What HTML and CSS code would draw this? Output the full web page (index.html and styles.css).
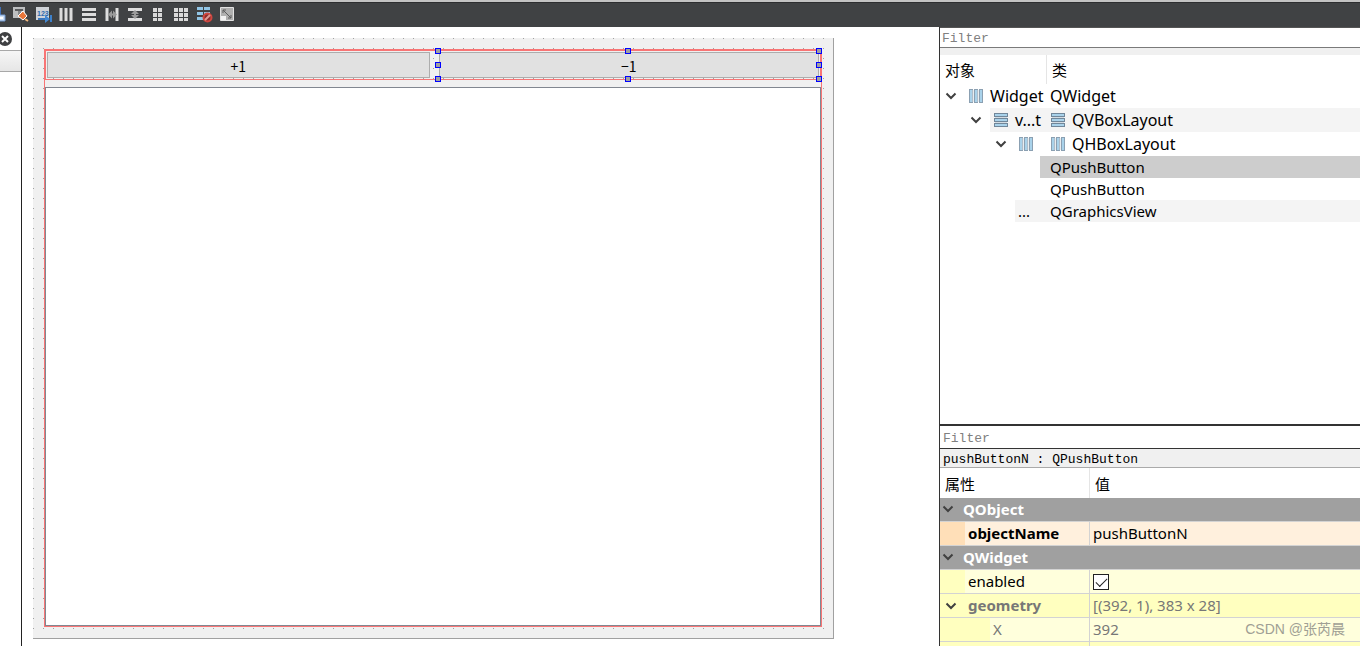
FILE: index.html
```html
<!DOCTYPE html>
<html lang="zh-CN">
<head>
<meta charset="utf-8">
<title>Widget - Qt Designer</title>
<link rel="stylesheet" href="styles.css">
</head>
<body>
<svg class="defs" aria-hidden="true">
  <defs>
    <linearGradient id="blue-h" x1="0" x2="1" y1="0" y2="0"><stop offset="0" stop-color="#8db8d4"/><stop offset="1" stop-color="#b9dcf0"/></linearGradient>
    <linearGradient id="blue-v" x1="0" x2="0" y1="0" y2="1"><stop offset="0" stop-color="#b9def2"/><stop offset="1" stop-color="#8ab6d2"/></linearGradient>
    <symbol id="chevron" viewBox="0 0 12 8"><path d="M1.500 1.500 6 6l4.500-4.500" fill="none" stroke="currentColor" stroke-width="2"/></symbol>
    <symbol id="hbox" viewBox="0 0 14 14"><path d="M0 0h4v14H0zM5 0h4v14H5zM10 0h4v14h-4z" fill="#8ba0b2"/><path d="M1 1h2v12H1zM6 1h2v12H6zM11 1h2v12h-2z" fill="#a9d2ea"/><path d="M4 1v12M9 1v12" stroke="#d4dce2"/></symbol>
    <symbol id="vbox" viewBox="0 0 14 14"><path d="M0 0h14v4H0zM0 5h14v4H0zM0 10h14v4H0z" fill="#71879a"/><path d="M1 1h12v2H1zM1 6h12v2H1zM1 11h12v2H1z" fill="#a9d2ea"/><path d="M1 4.500h12M1 9.500h12" stroke="#d4dce2"/></symbol>
  </defs>
</svg>
<header class="toolbar">
  <button class="tool tool-cut" aria-label="Edit widgets"><svg viewBox="0 0 16 16"><path d="M6 0h5v9H6z" fill="#3f6fb5"/><path d="M2 8h13v6H2z" fill="#cfe0f5" stroke="#6f97cf"/><path d="M4 11h9" stroke="#fff" stroke-width="2"/></svg></button>
  <button class="tool" aria-label="Edit signals and slots"><svg viewBox="0 0 16 16"><path d="M0 0h12v11H0z" fill="#bdbfc1"/><path d="M2 2h8v2H2z" fill="#5a5c5e"/><path d="M5 4h3v6H5z" fill="#85888a"/><path d="m10 4 4 5-4 4-5-4z" fill="#e8763a" stroke="#fff"/><path d="m12 12 3 2" stroke="#f5bb80" stroke-width="2"/></svg></button>
  <button class="tool" aria-label="Edit tab order"><svg viewBox="0 0 16 16"><path d="M0 0h13v13H0z" fill="#cfd3d8"/><text class="digits" x="1" y="9">123</text><path d="M2 12h8" stroke="#3976bd" stroke-width="2"/><path d="m9 8 5 4-5 4z" fill="#4289d4"/><path d="M15 8v7" stroke="#3d80ca" stroke-width="2"/></svg></button>
  <button class="tool" aria-label="Lay out horizontally"><svg viewBox="0 0 16 16"><path d="M2 1v13M7 1v13M12 1v13" stroke="#dcdcdc" stroke-width="3"/></svg></button>
  <button class="tool" aria-label="Lay out vertically"><svg viewBox="0 0 16 16"><path d="M0 2.500h14M0 7.500h14M0 12.500h14" stroke="#dcdcdc" stroke-width="3"/></svg></button>
  <button class="tool" aria-label="Lay out horizontally in splitter"><svg viewBox="0 0 16 16"><path d="M2 1v13M12 1v13" stroke="#dedede" stroke-width="3"/><path d="m3 7.500 4-4v3h1v-3l4 4-4 4v-3H7v3z" fill="#9a9a9a"/></svg></button>
  <button class="tool" aria-label="Lay out vertically in splitter"><svg viewBox="0 0 16 16"><path d="M0 2.500h14M0 12.500h14" stroke="#dedede" stroke-width="3"/><path d="m7 3-4 4h3v1H3l4 4 4-4H8V7h3z" fill="#9a9a9a"/></svg></button>
  <button class="tool" aria-label="Lay out in form"><svg viewBox="0 0 16 16"><path d="M4 1v13M9 1v13" stroke="#dadada" stroke-width="4" stroke-dasharray="4 1"/></svg></button>
  <button class="tool" aria-label="Lay out in grid"><svg viewBox="0 0 16 16"><path d="M2 1v13M7 1v13M12 1v13" stroke="#dadada" stroke-width="4" stroke-dasharray="4 1"/></svg></button>
  <button class="tool" aria-label="Break layout"><svg viewBox="0 0 16 16"><path d="M0 1.500h13M0 6.500h13M0 11.500h6" stroke="#91c5e6" stroke-width="3" stroke-dasharray="6 1"/><circle cx="10.500" cy="10.500" r="4" fill="#8b2d2e" stroke="#cf4740" stroke-width="2"/><path d="m8 13 5-5" stroke="#dd9a95" stroke-width="2"/></svg></button>
  <button class="tool" aria-label="Adjust size"><svg viewBox="0 0 16 16"><path d="M.5.5h13v13H.5z" fill="#b0b0b0" stroke="#e2e2e2"/><path d="M1 9h5v4H1z" fill="#f2f2f2"/><path d="m3 3 8 8M3 6V3h3M11 8v3H8" fill="none" stroke="#5c5c5c"/></svg></button>
</header>
<main class="workspace">
  <aside class="dock">
    <div class="dock-title"><button class="close" aria-label="Close"><svg viewBox="0 0 14 14"><circle cx="7" cy="7" r="7" fill="#3f4042"/><path d="m4 4 6 6m0-6-6 6" stroke="#fff" stroke-width="2"/></svg></button></div>
    <div class="dock-header"></div>
  </aside>
  <section class="canvas">
    <div class="form">
      <div class="vbox-outline">
        <div class="hbox-outline">
          <button class="push">+1</button>
          <div class="selected">
            <button class="push">−1</button>
            <i class="handle left top"></i><i class="handle mid top"></i><i class="handle right top"></i>
            <i class="handle left center"></i><i class="handle right center"></i>
            <i class="handle left bottom"></i><i class="handle mid bottom"></i><i class="handle right bottom"></i>
          </div>
        </div>
        <div class="graphics-view"></div>
      </div>
    </div>
  </section>
  <aside class="inspectors">
    <section class="objects">
      <input class="filter" type="text" placeholder="Filter" aria-label="Filter objects">
      <table class="tree">
        <thead><tr><th>对象</th><th>类</th></tr></thead>
        <tbody>
          <tr class="level-0"><td><div class="node"><svg class="chevron"><use href="#chevron"/></svg><span class="item"><svg class="icon"><use href="#hbox"/></svg>Widget</span></div></td><td>QWidget</td></tr>
          <tr class="level-1 shaded"><td><div class="node"><svg class="chevron"><use href="#chevron"/></svg><span class="item"><svg class="icon"><use href="#vbox"/></svg>v...t</span></div></td><td><span class="type"><svg class="icon"><use href="#vbox"/></svg>QVBoxLayout</span></td></tr>
          <tr class="level-2"><td><div class="node"><svg class="chevron"><use href="#chevron"/></svg><span class="item"><svg class="icon"><use href="#hbox"/></svg></span></div></td><td><span class="type"><svg class="icon"><use href="#hbox"/></svg>QHBoxLayout</span></td></tr>
          <tr class="leaf level-3 current"><td><div class="node"><span class="item"></span></div></td><td>QPushButton</td></tr>
          <tr class="leaf level-3"><td><div class="node"><span class="item"></span></div></td><td>QPushButton</td></tr>
          <tr class="leaf level-2 shaded"><td><div class="node"><span class="item">...</span></div></td><td>QGraphicsView</td></tr>
        </tbody>
      </table>
    </section>
    <section class="properties">
      <input class="filter" type="text" placeholder="Filter" aria-label="Filter properties">
      <div class="object-name">pushButtonN : QPushButton</div>
      <table class="props">
        <thead><tr><th>属性</th><th>值</th></tr></thead>
        <tbody>
          <tr class="group"><th colspan="2"><svg class="chevron"><use href="#chevron"/></svg>QObject</th></tr>
          <tr class="orange"><td><div class="prop"><b>objectName</b></div></td><td>pushButtonN</td></tr>
          <tr class="group"><th colspan="2"><svg class="chevron"><use href="#chevron"/></svg>QWidget</th></tr>
          <tr class="yellow"><td><div class="prop"><label for="enabled">enabled</label></div></td><td><input class="check" type="checkbox" id="enabled" checked></td></tr>
          <tr class="yellow deep muted"><td><div class="prop"><svg class="chevron"><use href="#chevron"/></svg><b>geometry</b></div></td><td>[(392, 1), 383 x 28]</td></tr>
          <tr class="yellow nested muted"><td><div class="prop">X</div></td><td><div class="value">392<span class="watermark">CSDN @张芮晨</span></div></td></tr>
          <tr class="yellow deep"><td><div class="prop"></div></td><td></td></tr>
        </tbody>
      </table>
    </section>
  </aside>
</main>
</body>
</html>
```
FILE: styles.css
```css
* { box-sizing: border-box; }
body {
  margin: 0;
  height: 100vh;
  overflow: hidden;
  display: flex;
  flex-direction: column;
  background: #fff;
  color: #000;
  font: 16px/22px "Noto Sans", "Noto Sans CJK SC", sans-serif;
}
button { border: 0; padding: 0; background: none; font: inherit; color: inherit; }
svg { display: block; flex: none; }
.defs { position: absolute; width: 0; height: 0; }

.toolbar {
  flex: none;
  display: flex;
  gap: 7px;
  height: 27px;
  padding-top: 5px;
  border-top: 2px solid #c3c3c3;
  background: #404244;
  box-shadow: inset 0 1px #2d2e30;
}
.tool { flex: none; width: 16px; height: 16px; }
.tool svg { width: 16px; height: 16px; }
.tool-cut { margin-left: -10px; }
.digits { font: bold 7px "Liberation Sans", sans-serif; fill: #2d69ae; }

.workspace { flex: 1; min-height: 0; display: flex; }
.dock { flex: none; width: 22px; border-right: 1px solid #222; }
.dock-title { height: 24px; padding-top: 5px; border-bottom: 1px solid #a8a8a8; }
.close { display: block; width: 14px; height: 14px; margin-left: -2px; }
.close svg { width: 14px; height: 14px; }
.dock-header { height: 21px; border-bottom: 1px solid #a8a8a8; background: linear-gradient(#f6f6f6, #e6e6e6); }

.canvas { flex: 1; min-width: 0; display: flex; padding: 11px 105px 7px 11px; }
.form {
  flex: 1;
  display: flex;
  padding: 11px;
  border: solid #a0a0a0;
  border-width: 0 1px 1px 0;
  background: conic-gradient(from 270deg at 1px 1px, #a0a0a0 90deg, #f0f0f0 0) 0 0 / 10px 10px;
}
.vbox-outline { flex: 1; display: flex; flex-direction: column; gap: 7px; border: 1px solid #f87575; }
.hbox-outline { display: flex; align-items: flex-start; gap: 9px; height: 30px; padding: 1px 0 0 1px; border: 1px solid #f87575; }
.push { flex: 1; height: 26px; padding-top: 1px; border: 1px solid #adadad; background: #e1e1e1; font: 14px/16px "Noto Sans CJK SC", sans-serif; }
.hbox-outline { padding-right: 0; }
.selected { position: relative; flex: 1; display: flex; }
.handle { position: absolute; width: 6px; height: 6px; border: 1px solid #00f; background: #a0a0a0; }
.left { left: -4px; }
.mid { left: calc(50% - 4px); }
.right { right: -3px; }
.top { top: -4px; }
.center { top: 10px; }
.bottom { top: 24px; }
.graphics-view { flex: 1; border: 1px solid #828790; background: #fff; }
.hbox-outline { padding-right: 1px; }

.inspectors { flex: none; width: 421px; display: flex; flex-direction: column; border-left: 1px solid #333; }
.objects { height: 397px; }
.filter { display: block; width: 100%; height: 21px; padding: 1px 2px 0; border: 1px solid #7a7a7a; border-right: 0; border-left: 0; background: #fff; font: 13px/18px "Liberation Mono", monospace; outline: 0; }
.filter::placeholder { color: #808080; opacity: 1; }
table { width: 100%; table-layout: fixed; border-collapse: separate; border-spacing: 0; }
th, td { padding: 0; text-align: left; white-space: nowrap; overflow: hidden; }
thead th { height: 29px; padding-left: 5px; font: 15px/22px "Noto Sans CJK SC", sans-serif; }
thead th + th { border-left: 1px solid #e5e5e5; }

.objects .filter { border-top-color: #555; }
.tree { border-top: 7px solid #f0f0f0; }
.tree th:first-child { width: 106px; }
.tree tbody td { height: 24px; line-height: 22px; }
.tree .leaf td { height: 22px; font-size: 15px; }
.tree td + td { padding-left: 4px; }
.node { display: flex; align-items: stretch; height: 24px; }
.leaf .node { height: 22px; }
.chevron { width: 12px; height: 8px; color: #404040; }
.node .chevron { align-self: center; margin-left: -20px; margin-right: 8px; }
.level-0 .node { padding-left: 25px; }
.level-1 .node { padding-left: 50px; }
.level-2 .node { padding-left: 75px; }
.level-3 .node { padding-left: 100px; }
.item { flex: 1; display: flex; align-items: center; gap: 7px; padding-left: 4px; }
.leaf .item { padding-left: 3px; }
.type { display: flex; align-items: center; gap: 7px; padding-left: 1px; }
.icon { width: 14px; height: 14px; }
.shaded .item, .shaded td + td { background: #f4f4f4; }
.current .item, .current td + td { background: #cdcdcd; }

.properties { flex: 1; min-height: 0; overflow: hidden; border-top: 2px solid #333; }
.properties .filter { height: 23px; padding: 2px 3px 0; border-top: 0; border-bottom-color: #333; }
.object-name { height: 19px; padding: 1px 0 0 3px; border-bottom: 1px solid #aaa; background: #f0f0f0; font: 13px/20px "Liberation Mono", monospace; }
.props thead th { height: 30px; padding-top: 2px; }
.props thead th:first-child { width: 149px; }
.props td { height: 24px; border-bottom: 1px solid #d3d3d3; font-size: 15px; line-height: 23px; }
.props td + td { padding-left: 3px; border-left: 1px solid #d3d3d3; }
.group th { height: 24px; border-bottom: 1px solid #d3d3d3; background: #a0a0a0; color: #fff; font-size: 15px; line-height: 23px; }
.group .chevron { display: inline-block; margin: 0 9px 2px 2px; }
.prop { display: flex; align-items: center; height: 23px; padding-left: 28px; }
.prop .chevron { margin: 0 11px 0 -23px; }
.orange td { background: #fff0dd; }
.orange .prop { background: linear-gradient(#ffdfb8, #ffdfb8) 0 0 / 25px 100% no-repeat; }
.yellow td { background: #ffffdc; }
.yellow .prop { background: linear-gradient(#ffffbf, #ffffbf) 0 0 / 25px 100% no-repeat; }
.yellow.nested .prop { padding-left: 53px; background-size: 50px 100%; }
.yellow.deep td { background: #ffffbf; }
.muted { color: #777; }
.check { appearance: none; display: block; width: 16px; height: 16px; margin: 0; border: 1px solid #222; background: #fff; }
.check:checked::after { content: ""; display: block; width: 10px; height: 5px; margin: 3px 2px; border: solid #222; border-width: 0 0 1px 1px; transform: rotate(-45deg); }
.value { display: flex; justify-content: space-between; padding-right: 15px; }
.watermark { color: #a0a094; font: 14px/23px "Liberation Sans", "Noto Sans CJK SC", sans-serif; }
```
